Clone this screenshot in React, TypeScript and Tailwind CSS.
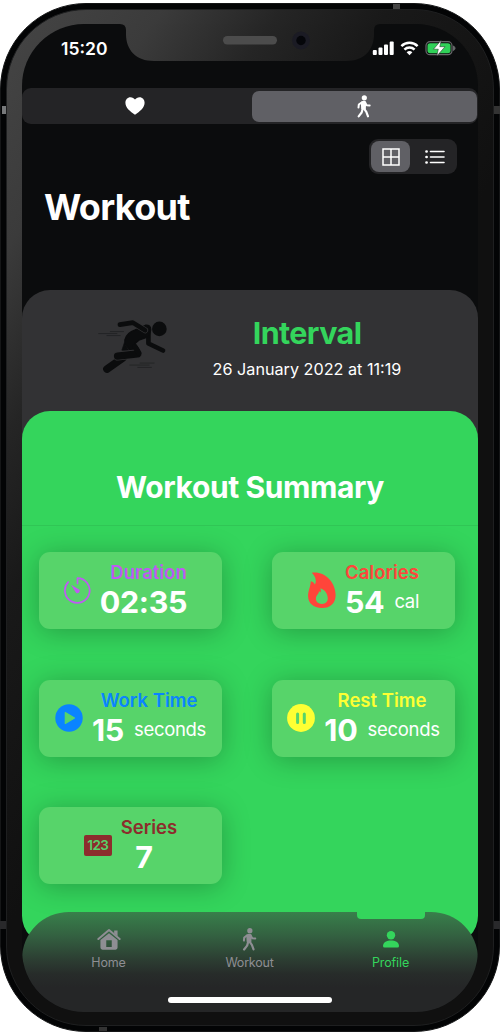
import type { ReactNode } from 'react';

function WalkIcon({ className }: { className: string }) {
  return (
    <svg viewBox="0 0 42 68" className={className} fill="none" stroke="currentColor" strokeLinecap="round" strokeLinejoin="round">
      <circle cx="22" cy="8" r="7.800" fill="currentColor" stroke="none" />
      <path d="M14 22 Q20 17 25 21 L24 41 L15 40 Z" fill="currentColor" strokeWidth="5" />
      <path d="M14 22 L5.500 28 L4.500 37" strokeWidth="6" />
      <path d="M24 22 L29 30 L38 31" strokeWidth="6" />
      <path d="M17 41 L14 52 L5 63.500" strokeWidth="6.500" />
      <path d="M20 39 L28 50 L33 63.500" strokeWidth="6.500" />
    </svg>
  );
}

function HeartIcon() {
  return (
    <svg viewBox="0 0 20 18" className="h-[18px] w-5" fill="#fff">
      <path d="M10 17.800C5.200 14.600 .4 10.800 .4 5.800C.4 2.600 2.600.2 5.400.2C7.400.2 9 1.100 10 2.600C11 1.100 12.600.2 14.600.2C17.400.2 19.600 2.600 19.600 5.800C19.600 10.800 14.800 14.600 10 17.800Z" />
    </svg>
  );
}

function Runner() {
  return (
    <svg viewBox="50 115 220 170" className="h-[57px] w-[73px]" fill="none" stroke="#0b0c0d" strokeLinecap="round" strokeLinejoin="round">
      <path d="M90 155H130M55 161H110M80 167H120M180 250H222M149 256H207M173 263H214" stroke="#1c1d1f" strokeWidth="2" />
      <circle cx="238" cy="147" r="22" fill="#0b0c0d" stroke="none" />
      <path d="M80 268L128 234" strokeWidth="23" />
      <path d="M205 148V191L249 212" strokeWidth="14" />
      <path d="M132 190L125 211L146 212Z" fill="#0b0c0d" strokeWidth="2" />
      <path d="M134 180Q140 158 165 150L196 136Q212 134 212 150L206 170L176 181L164 192Q184 214 182 226L164 228L134 192Z" fill="#0b0c0d" strokeWidth="4" />
      <path d="M172 222L112 229" stroke="#323234" strokeWidth="27" />
      <path d="M172 222L112 229" strokeWidth="22" />
      <path d="M164 200L176 220" strokeWidth="16" />
      <path d="M119 134L158 128L195 151" stroke="#323234" strokeWidth="18" />
      <path d="M119 134L158 128L195 151" strokeWidth="14" />
    </svg>
  );
}

function TimerIcon() {
  return (
    <svg viewBox="0 0 84 84" className="h-[27px] w-[27px]" fill="none" stroke="#bf5af2" strokeWidth="5.500" strokeLinecap="round" strokeLinejoin="round">
      <path d="M42 20V3.500A38.500 38.500 0 1 1 13 16" />
      <path d="M22 24L48 40A7.500 7.500 0 0 1 38 50Z" fill="#bf5af2" stroke="none" />
    </svg>
  );
}

function FlameIcon() {
  return (
    <svg viewBox="0 0 82 106" className="h-9 w-7" fill="#ff453a">
      <path fillRule="evenodd" d="M11 2C50-3 80 30 81 66C82 90 67 106 41 106C15 106 0 92 0 71C0 54 7 45 8 27C15 29 18 32 20 37C26 27 22 12 11 2ZM36 48C38 52 38 56 37 60C35 58 34 58 32 57C32 66 23 68 23 79C23 88 30 94 41 94C52 94 58 87 58 78C58 64 49 52 36 48Z" />
    </svg>
  );
}

function PlayIcon() {
  return (
    <svg viewBox="0 0 28 28" className="h-7 w-7">
      <circle cx="14" cy="14" r="13.700" fill="#0a84ff" />
      <path d="M10.300 8.600L19.500 14L10.300 19.400Z" fill="#57d46a" stroke="#57d46a" strokeWidth="1.200" strokeLinejoin="round" />
    </svg>
  );
}

function PauseIcon() {
  return (
    <svg viewBox="0 0 28 28" className="h-7 w-7">
      <circle cx="14" cy="14" r="13.900" fill="#feff33" />
      <path d="M10.600 10V18.500M17.300 10V18.500" stroke="#57d46a" strokeWidth="3" strokeLinecap="round" />
    </svg>
  );
}

type StatProps = { icon: ReactNode; title: string; titleClass: string; value: string; unit?: string };

function Stat({ icon, title, titleClass, value, unit }: StatProps) {
  return (
    <div className="flex h-[77px] items-center justify-center gap-[9px] rounded-[11px] bg-[#57d46a] pb-px shadow-[0_3px_28px_rgba(0,0,0,0.26)]">
      {icon}
      <div className="flex flex-col items-center whitespace-nowrap">
        <div className={`text-[18.500px] leading-[23px] font-semibold ${titleClass}`}>{title}</div>
        <div className="flex items-center gap-[10px] text-white">
          <span className="text-[30.500px] leading-[35px] font-bold tracking-[-0.300px]">{value}</span>
          <span className="text-[18.500px] leading-[35px] tracking-[-0.300px]">{unit}</span>
        </div>
      </div>
    </div>
  );
}

function StatusIcons() {
  return (
    <svg viewBox="0 0 84 16" className="mt-px h-4 w-[84px]">
      <g fill="#fff">
        <rect x="0.800" y="10" width="4" height="5" rx="1" />
        <rect x="6.500" y="7.500" width="4" height="7.500" rx="1" />
        <rect x="12" y="4.500" width="4" height="10.500" rx="1" />
        <rect x="17.700" y="1.500" width="4" height="13.500" rx="1" />
        <path d="M37.500 15.200L34.600 12.300Q37.500 9.600 40.400 12.300Z" />
      </g>
      <g fill="none" stroke="#fff" strokeWidth="2.500">
        <path d="M29.400 6.200A11.500 11.500 0 0 1 45.600 6.200" />
        <path d="M32.400 9.700A7.300 7.300 0 0 1 42.600 9.700" />
      </g>
      <rect x="54" y="1.700" width="26" height="13" rx="4" fill="none" stroke="#67686a" strokeWidth="1.200" />
      <rect x="55.500" y="3.200" width="23" height="10" rx="2.600" fill="#30d158" />
      <path d="M81.500 6V10.500Q83 9.700 83 8.200T81.500 6Z" fill="#67686a" stroke="#67686a" />
      <path d="M69.200.3L61.500 9.200H66.300L64.800 16L73 6.700H67.800Z" fill="#fff" stroke="#222" strokeWidth=".5" />
    </svg>
  );
}

function Notch() {
  return (
    <svg viewBox="0 0 260 40" className="absolute top-[-2px] left-[98px] h-10 w-[260px]">
      <defs>
        <linearGradient id="bezel" gradientUnits="userSpaceOnUse" x1="-114" y1="-13" x2="305" y2="259">
          <stop offset="0" stopColor="#454545" />
          <stop offset=".26" stopColor="#3b3b3b" />
          <stop offset=".46" stopColor="#252525" />
          <stop offset=".64" stopColor="#191919" />
          <stop offset="1" stopColor="#101010" />
        </linearGradient>
      </defs>
      <path d="M0 0V2Q6 2 6 8V12C6 28 16 39 34 39H226C244 39 254 28 254 12V8Q254 2 260 2V0Z" fill="url(#bezel)" />
      <rect x="103" y="14" width="54" height="8.500" rx="4.200" fill="#4c4c4c" />
      <circle cx="181" cy="18.500" r="9" fill="#1b1b24" />
      <circle cx="181" cy="18.500" r="4.700" fill="#05060a" />
    </svg>
  );
}

export default function App() {
  return (
    <div className="h-[1035px] w-[500px] overflow-hidden bg-white pt-[3px] font-['Inter',sans-serif]">
      <div className="relative h-[1029px] rounded-[86px] border border-[#151617] bg-[#030405] px-[5px] py-[5px]">
        <div className="absolute top-[102px] left-[1px] h-2 w-1 bg-[#77797b]" />
        <div className="absolute top-[102px] right-[-1px] h-2 w-1.5 bg-[#333]" />
        <div className="absolute top-[917px] left-[-1px] h-2 w-1.5 bg-[#29292b]" />
        <div className="absolute top-[917px] right-[-1px] h-2 w-1.5 bg-[#29292b]" />
        <div className="absolute top-0 left-[392px] h-[5px] w-[7px] bg-[#444]" />
        <div className="absolute bottom-0 left-[98px] h-1 w-2 bg-[#333]" />
        <div className="h-full rounded-[80px] border border-[#1e1f20] bg-[linear-gradient(123deg,#454545_0px,#3b3b3b_130px,#252525_230px,#191919_320px,#101010_500px)] px-[15px] pt-[14px] pb-[13px]">
          <div className="relative flex h-full flex-col overflow-hidden rounded-[62px] bg-[#0b0c0d]">
            <Notch />
            <header className="flex h-[64px] shrink-0 items-start justify-between pt-[15px] pr-[22px] pl-[39px]">
              <span className="text-[17.500px] leading-[20px] font-semibold text-white">15:20</span>
              <StatusIcons />
            </header>

            <div className="flex h-9 shrink-0 rounded-[9px] bg-[#242426] p-[2px] pr-px">
              <div className="flex flex-1 items-center justify-center pr-[6px]"><HeartIcon /></div>
              <div className="my-[0.500px] flex w-[225px] items-center justify-center rounded-[7px] bg-[#606065] pr-[2px] text-white">
                <WalkIcon className="h-[23px] w-[14px]" />
              </div>
            </div>

            <div className="mt-[15px] mr-[21px] flex h-[35px] w-[88px] shrink-0 self-end rounded-[9px] bg-[#242426] p-[2px]">
              <div className="flex w-[39px] items-center justify-center rounded-[8px] bg-[#606065]">
                <svg viewBox="0 0 18 18" className="h-[18px] w-[18px]" fill="none" stroke="#fff" strokeWidth="1.500">
                  <path d="M1 1H17V17H1ZM9 1V17M1 9H17" />
                </svg>
              </div>
              <div className="flex flex-1 items-center justify-center pl-[4px]">
                <svg viewBox="0 0 20 16" className="h-4 w-5" fill="none" stroke="#fff" strokeWidth="1.600" strokeLinecap="round">
                  <path d="M5.500 2.500H19M5.500 8H19M5.500 13.500H19" />
                  <path d="M1.500 2.500h.1M1.500 8h.1M1.500 13.500h.1" strokeWidth="2.700" />
                </svg>
              </div>
            </div>

            <h1 className="mt-[11px] ml-[22px] h-[44px] shrink-0 text-[36px] leading-[44px] font-bold tracking-[-0.700px] text-white">Workout</h1>

            <div className="mt-[61px] flex h-[650px] shrink-0 flex-col rounded-t-[28px] bg-[#323234]">
              <div className="flex h-[121px] shrink-0 items-start">
                <div className="pt-[28px] pl-[75px]"><Runner /></div>
                <div className="ml-[27px] flex w-[220px] flex-col items-center pt-[25px] whitespace-nowrap">
                  <h2 className="text-[30.500px] leading-[36px] font-bold tracking-[-0.600px] text-[#34d55c]">Interval</h2>
                  <p className="mt-[7px] text-[16.200px] leading-[22px] text-white">26 January 2022 at 11:19</p>
                </div>
              </div>
              <section className="-mb-px flex h-[533px] shrink-0 flex-col rounded-[28px] bg-[#34d55c] shadow-[0_28px_0_#0b0c0d]">
                <h2 className="h-[115px] shrink-0 border-b border-[#30c655] pt-[58px] text-center text-[30px] leading-[37px] font-bold tracking-[-0.400px] text-white">Workout Summary</h2>
                <div className="mt-[26px] grid grid-cols-[183px_183px] gap-x-[50px] gap-y-[50.500px] pl-[17px]">
                  <Stat icon={<TimerIcon />} title="Duration" titleClass="text-[#bf5af2]" value="02:35" unit="" />
                  <Stat icon={<FlameIcon />} title="Calories" titleClass="text-[#ff453a]" value="54" unit="cal" />
                  <Stat icon={<PlayIcon />} title="Work Time" titleClass="text-[#0a84ff]" value="15" unit="seconds" />
                  <Stat icon={<PauseIcon />} title="Rest Time" titleClass="text-[#feff33]" value="10" unit="seconds" />
                  <Stat
                    icon={<span className="flex h-[21px] w-7 items-center justify-center rounded-[2px] bg-[#8c2d2d] text-[13.500px] font-semibold tracking-[-0.600px] text-[#57d46a]">123</span>}
                    title="Series"
                    titleClass="text-[#8c2d2d]"
                    value="7"
                  />
                </div>
              </section>
            </div>

            <nav className="absolute inset-x-0 bottom-0 h-[100px] rounded-t-[47px] bg-[linear-gradient(#38804b_0px,#335f40_25px,#2c3d32_48px,#272c2a_62px,#252627_75px)] text-[12.500px] leading-4 text-[#8e8e93]">
              <div className="grid grid-cols-[141px_141px_141px] pt-[16px] pl-[16px]">
                <div className="flex flex-col items-center">
                  <svg viewBox="0 0 70 62" className="h-[22px] w-6" fill="currentColor">
                    <path d="M4 31L35 5L66 31" fill="none" stroke="currentColor" strokeWidth="6" strokeLinecap="round" strokeLinejoin="round" />
                    <path d="M50 6H60V23L50 15Z" />
                    <path fillRule="evenodd" d="M10 34L35 14L60 34V56Q60 62 54 62H16Q10 62 10 56ZM27 35V54H43V35Z" />
                  </svg>
                  <span className="mt-[5px] tracking-[-0.100px]">Home</span>
                </div>
                <div className="flex flex-col items-center">
                  <WalkIcon className="h-[23px] w-[15px]" />
                  <span className="mt-[4px] tracking-[-0.200px]">Workout</span>
                </div>
                <div className="flex flex-col items-center text-[#34d55c]">
                  <svg viewBox="0 0 18 20" className="h-[22px] w-[18px]" fill="currentColor">
                    <circle cx="9" cy="6.300" r="4.200" />
                    <path d="M1 17C1 9.800 17 9.800 17 17Q17 18.500 15.500 18.500H2.500Q1 18.500 1 17Z" />
                  </svg>
                  <span className="mt-[5px] tracking-[-0.100px]">Profile</span>
                </div>
              </div>
              <div className="absolute top-0 left-[335px] h-[6.500px] w-[68px] rounded-b-[4px] bg-[#34d55c]" />
              <div className="absolute bottom-[9.500px] left-[146px] h-[5.500px] w-[164px] rounded-full bg-white" />
            </nav>
          </div>
        </div>
      </div>
    </div>
  );
}
